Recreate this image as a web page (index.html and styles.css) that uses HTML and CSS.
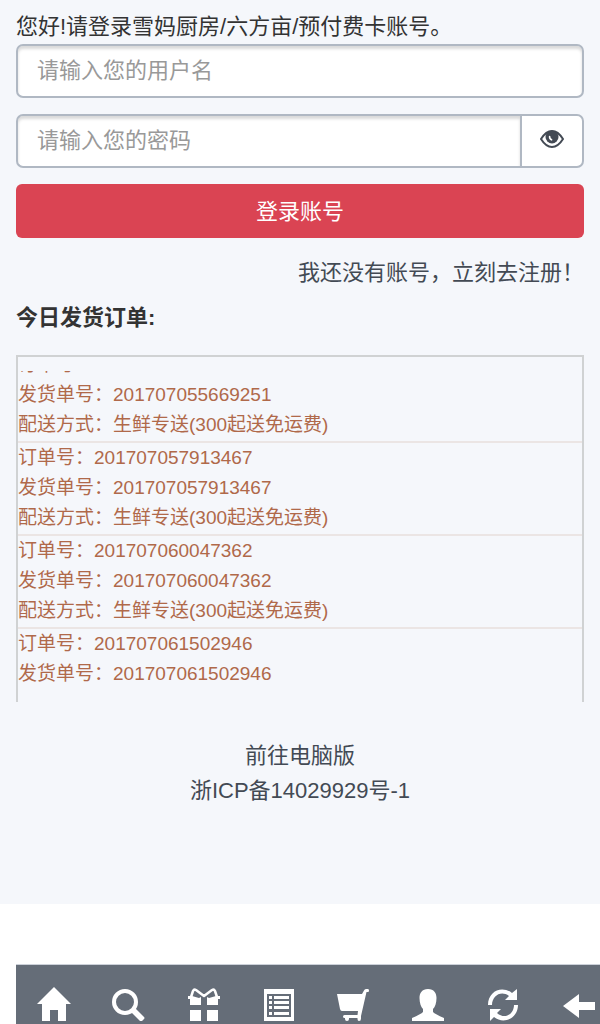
FILE: index.html
```html
<!DOCTYPE html>
<html lang="zh-CN">
<head>
    <meta charset="utf-8">
    <meta name="viewport" content="width=device-width, initial-scale=1">
    <title>登录账号</title>
    <link rel="stylesheet" href="styles.css">
</head>
<body>
    <main class="page">
        <form class="login-form">
            <label class="greeting" for="username">您好!请登录雪妈厨房/六方亩/预付费卡账号。</label>
            <input class="form-control" type="text" id="username" placeholder="请输入您的用户名">
            <div class="input-group">
                <input class="form-control" type="password" id="password" placeholder="请输入您的密码" aria-label="密码">
                <button class="toggle-password" type="button" aria-label="显示密码">
                    <svg class="eye" viewBox="0 0 24 18">
                        <path fill="none" stroke="currentColor" stroke-width="2" stroke-linejoin="round" d="M1 9Q6 1 12 1T23 9Q18 17 12 17T1 9Z"/>
                        <circle cx="12" cy="7" r="6.500" fill="currentColor"/>
                        <path fill="none" stroke="#fff" stroke-width="1.6" stroke-linecap="round" d="M9.600 6.500Q9.500 9 11.600 9.800"/>
                    </svg>
                </button>
            </div>
            <button class="btn-login" type="submit">登录账号</button>
        </form>
        <a class="register" href="#">我还没有账号，立刻去注册！</a>

        <h2 class="title">今日发货订单:</h2>
        <div class="orders">
            <div class="orders-view">
                <ul class="order-list">
                    <li>订单号：201707055669251<br>发货单号：201707055669251<br>配送方式：生鲜专送(300起送免运费)</li>
                    <li>订单号：201707057913467<br>发货单号：201707057913467<br>配送方式：生鲜专送(300起送免运费)</li>
                    <li>订单号：201707060047362<br>发货单号：201707060047362<br>配送方式：生鲜专送(300起送免运费)</li>
                    <li>订单号：201707061502946<br>发货单号：201707061502946</li>
                </ul>
            </div>
        </div>

        <footer class="footer">
            <a href="#">前往电脑版</a>
            <a href="#">浙ICP备14029929号-1</a>
        </footer>
    </main>

    <nav class="navbar">
        <div class="nav-items">
            <a href="#" aria-label="首页">
                <svg viewBox="0 0 34 34"><path d="M17 0L34 17H29V34H21V23H13V34H5V17H0Z"/></svg>
            </a>
            <a href="#" aria-label="搜索">
                <svg viewBox="0 0 34 34"><circle cx="13" cy="15" r="11" fill="none" stroke="#fff" stroke-width="4"/><path d="M19 25L23 21L32 30Q33 31 32 32L30 34Q29 35 28 34Z"/></svg>
            </a>
            <a href="#" aria-label="礼品">
                <svg viewBox="0 0 34 34"><path fill="none" stroke="#fff" stroke-width="2.500" stroke-linejoin="round" d="M4 10L6 4Q7 2 9 3L17 9L25 3Q27 2 28 4L30 10"/><path d="M1 9H5L12 11L14 10V18H3V12H1ZM33 9H29L22 11L20 10V18H31V12H33ZM3 23H14V34H3ZM20 23H31V34H20Z"/></svg>
            </a>
            <a href="#" aria-label="订单">
                <svg viewBox="0 0 34 34"><path fill-rule="evenodd" d="M2 2H32V34H2ZM5 7V30H29V7Z"/><path d="M7 9H10V12H7ZM12 9H27V12H12ZM7 14H10V17H7ZM12 14H27V17H12ZM7 19H10V22H7ZM12 19H27V22H12ZM7 25H10V28H7ZM12 25H27V28H12Z"/></svg>
            </a>
            <a href="#" aria-label="购物车">
                <svg viewBox="0 0 34 34"><path fill-rule="evenodd" d="M0 7H25L27 3.500Q27.500 2 29 2H31Q32 2 32 3.500Q32 5 31 5H29.500L24 29V31.500Q24 34 22 34Q20.500 34 20.500 32V31H12V32Q12 34 10 34Q8 34 8 32V31H7.500Q6 31 6 29.500Q6 28 7.500 28H20.500L21 24H5Q3.500 24 3 22Z"/></svg>
            </a>
            <a href="#" aria-label="我的账号">
                <svg viewBox="0 0 34 34"><path d="M16 2C22 2 24.500 6 24.500 11C24.500 16 23 20 21 22V25Q23 27 32 31V34H0V31Q9 27 11 25V22C9 20 7.500 16 7.500 11C7.500 6 10 2 16 2Z"/></svg>
            </a>
            <a href="#" aria-label="刷新">
                <svg viewBox="0 0 34 34"><path d="M1 18C1 4 15-2 25 6L30 2V13H18L22 9C14 3 5 9 5 18ZM31 18C31 31 17 38 7 30L3 34V22H14L10 26C18 33 27 27 27 18Z"/></svg>
            </a>
            <a href="#" aria-label="返回">
                <svg viewBox="0 0 34 34"><path d="M1 19L17 7V15H33V23H17V31Z"/></svg>
            </a>
        </div>
    </nav>
</body>
</html>
```
FILE: styles.css
```css
* {
    box-sizing: border-box;
}
body {
    margin: 0;
    min-height: 100vh;
    display: flex;
    flex-direction: column;
    background-color: #fff;
    color: #333;
    font-family: "Liberation Sans", "Noto Sans CJK SC", sans-serif;
    font-size: 22px;
    line-height: 35px;
}
a {
    color: #434a54;
    text-decoration: none;
}
button,
input {
    font: inherit;
}
.page {
    flex: 1;
    display: flex;
    flex-direction: column;
    padding: 9px 16px 16px;
    background-color: #f5f7fb;
}
.login-form {
    display: flex;
    flex-direction: column;
    gap: 16px;
}
.greeting {
    margin-bottom: -16px;
}
.form-control {
    width: 100%;
    height: 54px;
    padding: 0 19px;
    border: 2px solid #b0b8c3;
    border-radius: 7px;
    background-color: #fff;
    box-shadow: inset 0 3px 3px rgba(0, 0, 0, .15);
    outline: none;
}
.form-control::placeholder {
    color: #999;
    opacity: 1;
}
.input-group {
    display: flex;
}
.input-group .form-control {
    flex: 1;
    min-width: 0;
    border-right: none;
    border-radius: 7px 0 0 7px;
}
.toggle-password {
    display: flex;
    align-items: center;
    justify-content: center;
    width: 64px;
    padding: 0 0 4px;
    border: 2px solid #b0b8c3;
    border-radius: 0 7px 7px 0;
    background-color: #fff;
    color: #434a54;
    cursor: pointer;
}
.eye {
    width: 24px;
    height: 18px;
}
.btn-login {
    height: 54px;
    border: none;
    border-radius: 6px;
    background-color: #da4453;
    color: #fff;
    cursor: pointer;
}
.register {
    align-self: flex-end;
    margin-top: 17px;
}
.title {
    margin: 10px 0 20px;
    font-size: 22px;
    font-weight: bold;
}
.orders {
    padding: 14px 0 16px;
    border: 2px solid #d0d2d3;
    border-bottom: none;
}
.orders-view {
    height: 315px;
    overflow: hidden;
}
.order-list {
    margin: -21px 0 0;
    padding: 0;
    list-style: none;
    color: #b0694a;
    font-size: 19px;
    line-height: 30px;
}
.order-list li {
    padding-bottom: 1px;
    border-bottom: 2px solid #ebe5e4;
}
.order-list li:last-child {
    border-bottom: none;
}
.footer {
    display: flex;
    flex-direction: column;
    align-items: center;
    margin-top: 36px;
}
.navbar {
    margin-top: 60px;
    padding-left: 16px;
    overflow: hidden;
}
.nav-items {
    display: grid;
    grid-template-columns: repeat(8, 1fr);
    /* runs past the right edge by the left indent */
    margin-right: -16px;
    height: 60px;
    border-top: 1px solid #ccd1d9;
    background-color: #656d78;
}
.nav-items a {
    display: flex;
    justify-content: center;
    padding-top: 22px;
}
.nav-items svg {
    width: 34px;
    height: 34px;
    fill: #fff;
}
```
